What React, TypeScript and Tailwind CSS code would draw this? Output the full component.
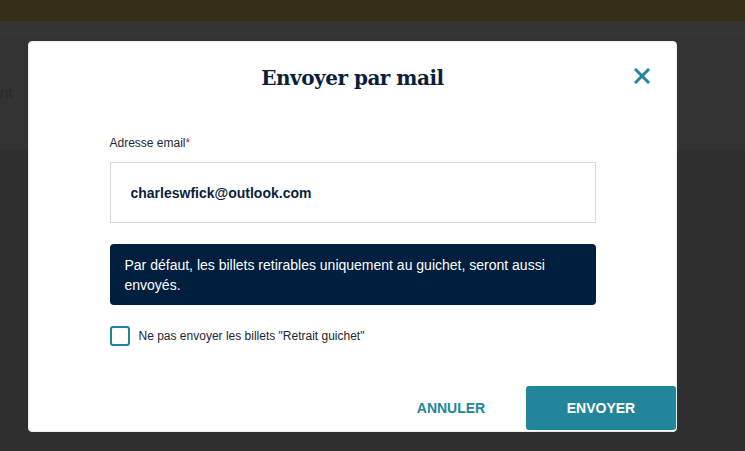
import { useState } from 'react';

function CloseIcon() {
  return (
    <svg width="16" height="16" viewBox="0 0 16 16" fill="none">
      <path d="M2 2L14 14M14 2L2 14" stroke="#21869a" strokeWidth="3" strokeLinecap="square" />
    </svg>
  );
}

export default function App() {
  const [email, setEmail] = useState('charleswfick@outlook.com');
  const [skipCounter, setSkipCounter] = useState(false);

  return (
    <div className="relative h-[451px] w-full overflow-hidden bg-[#2f2f2f] font-['Liberation_Sans',Arial,sans-serif]">
      {/* page behind the overlay */}
      <div className="h-[21px] bg-[#352f17]" />
      <div className="h-[15px] bg-[#353535]" />
      <div className="flex h-[114px] items-center bg-[#333333]">
        <span className="text-[15px] leading-[18px] text-[#1f2b36]">nt</span>
      </div>

      {/* Send by email dialog */}
      <div className="absolute left-[28px] top-[41px] flex h-[391px] w-[649px] flex-col rounded-[4px] border border-[#ececec] bg-white">
        <div className="relative flex justify-center pt-[22px]">
          <h2 className="h-[28px] font-['DejaVu_Serif',serif] text-[20px] leading-[28px] font-bold tracking-[-0.5px] text-[#0b1f3b]">
            Envoyer par mail
          </h2>
          <button className="absolute right-[26px] top-[26px]">
            <CloseIcon />
          </button>
        </div>

        <div className="mx-auto mt-[43px] w-[486px]">
          <label className="block text-[12px] leading-[16px] text-[#1d2633]">
            Adresse email<span className="text-[#d0202e]">*</span>
          </label>
          <input
            value={email}
            onChange={(e) => setEmail(e.target.value)}
            className="mt-[11px] box-border h-[61px] w-full border border-[#d5d8dc] pl-[20px] text-[14px] font-bold text-[#0b1f3b] outline-none"
          />

          <div className="mt-[21px] rounded-[4px] bg-[#001e3d] pb-[10px] pl-[15px] pr-[20px] pt-[11px] text-[14px] leading-[20px] text-white">
            Par défaut, les billets retirables uniquement au guichet, seront aussi envoyés.
          </div>

          <label className="mt-[21px] flex items-center gap-[9px] text-[12px] text-[#1d2633]">
            <input
              type="checkbox"
              checked={skipCounter}
              onChange={(e) => setSkipCounter(e.target.checked)}
              className="h-[20px] w-[20px] appearance-none rounded-[3px] border-2 border-[#21869a] bg-white"
            />
            Ne pas envoyer les billets "Retrait guichet"
          </label>
        </div>

        <div className="mb-[1px] mt-auto flex justify-end">
          <button className="h-[44px] w-[150px] text-[14px] font-bold uppercase text-[#21869a]">Annuler</button>
          <button className="h-[44px] w-[150px] rounded-[3px] bg-[#238599] text-[14px] font-bold uppercase text-white">
            Envoyer
          </button>
        </div>
      </div>
    </div>
  );
}
